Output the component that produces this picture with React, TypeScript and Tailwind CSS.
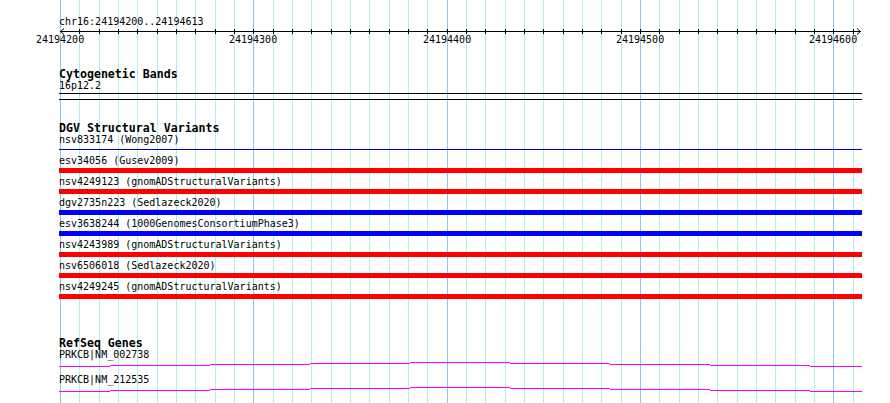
import React from 'react';

const mono = "font-['DejaVu_Sans_Mono','Liberation_Mono',monospace]";

// grid/tick x positions (absolute page px), every 10bp
const ticks = Array.from({ length: 42 }, (_, k) => Math.round(60 + (k * 193.33) / 10));
const ORIGIN = 59;

const majorLabels = [
  { k: 0, text: '24194200' },
  { k: 10, text: '24194300' },
  { k: 20, text: '24194400' },
  { k: 30, text: '24194500' },
  { k: 40, text: '24194600' },
];

type Variant = { label: string; kind: 'red' | 'blue' | 'thin' };

const variants: Variant[] = [
  { label: 'nsv833174 (Wong2007)', kind: 'thin' },
  { label: 'esv34056 (Gusev2009)', kind: 'red' },
  { label: 'nsv4249123 (gnomADStructuralVariants)', kind: 'red' },
  { label: 'dgv2735n223 (Sedlazeck2020)', kind: 'blue' },
  { label: 'esv3638244 (1000GenomesConsortiumPhase3)', kind: 'blue' },
  { label: 'nsv4243989 (gnomADStructuralVariants)', kind: 'red' },
  { label: 'nsv6506018 (Sedlazeck2020)', kind: 'red' },
  { label: 'nsv4249245 (gnomADStructuralVariants)', kind: 'red' },
];

const genes = ['PRKCB|NM_002738', 'PRKCB|NM_212535'];

// intron hat line: 1px steps every 100px, peak in the middle
const steps = [
  [0, 51, 4],
  [51, 151, 3],
  [151, 251, 2],
  [251, 351, 1],
  [351, 451, 0],
  [451, 551, 1],
  [551, 651, 2],
  [651, 751, 3],
  [751, 803, 4],
];

const GridLines = () => (
  <svg className="absolute inset-0" width={890} height={403} shapeRendering="crispEdges">
    {ticks.map((x, k) => (
      <line
        key={k}
        x1={x + 0.5}
        x2={x + 0.5}
        y1={0}
        y2={403}
        stroke={k % 10 === 0 ? '#88c8ee' : '#aeeef0'}
        strokeWidth={1}
      />
    ))}
  </svg>
);

const Ruler = () => (
  <div className="pt-[16px]">
    <div className="h-[12px] leading-[12px] text-[10px]">chr16:24194200..24194613</div>
    <svg width={803} height={6} className="block overflow-visible" shapeRendering="crispEdges">
      <line x1={1} x2={802} y1={3.5} y2={3.5} stroke="#000" />
      {ticks.slice(1).map((x, k) => (
        <line key={k} x1={x - ORIGIN + 0.5} x2={x - ORIGIN + 0.5} y1={1} y2={6} stroke="#000" />
      ))}
      <path d="M5 0.5 L1.5 3.5 L5 6.5" fill="none" stroke="#000" shapeRendering="auto" />
      <path d="M798 0.5 L801.5 3.5 L798 6.5" fill="none" stroke="#000" shapeRendering="auto" />
    </svg>
    <div className="relative h-[12px] leading-[12px] text-[10px]">
      {majorLabels.map((m) => (
        <span
          key={m.k}
          className="absolute top-0 w-[48px] text-center"
          style={{ left: ticks[m.k] - ORIGIN - 24 }}
        >
          {m.text}
        </span>
      ))}
    </div>
  </div>
);

const TrackTitle = ({ children }: { children: React.ReactNode }) => (
  <div className="h-[12px] leading-[12px] text-[11.6px] font-bold">{children}</div>
);

const VariantRow = ({ v }: { v: Variant }) => (
  <div className="h-[21px]">
    <div className="h-[12px] leading-[12px] text-[10px] whitespace-nowrap">{v.label}</div>
    <div className="mt-[1px] h-[5px] flex flex-col justify-center">
      {v.kind === 'thin' && <div className="h-[1px] bg-[#0000cc]" />}
      {v.kind === 'red' && <div className="h-[5px] bg-[#ff0000]" />}
      {v.kind === 'blue' && <div className="h-[5px] bg-[#0000ff]" />}
    </div>
  </div>
);

const GeneRow = ({ name }: { name: string }) => (
  <div className="h-[25px]">
    <div className="h-[12px] leading-[12px] text-[10px]">{name}</div>
    <svg width={803} height={13} className="block" shapeRendering="crispEdges">
      {steps.map(([a, b, dy], i) => (
        <line key={i} x1={a} x2={b} y1={1.5 + dy} y2={1.5 + dy} stroke="#ff00ff" strokeWidth={1} />
      ))}
    </svg>
  </div>
);

export default function App() {
  return (
    <div className={`relative w-[890px] h-[403px] overflow-hidden bg-white text-black ${mono}`}>
      <GridLines />
      <div className="relative ml-[59px] w-[803px] flex flex-col">
        <Ruler />

        <div className="mt-[22px]">
          <TrackTitle>Cytogenetic Bands</TrackTitle>
          <div className="h-[12px] leading-[12px] text-[10px]">16p12.2</div>
          <div className="mt-[1px] h-[7px] border-y border-black" />
        </div>

        <div className="mt-[22px]">
          <TrackTitle>DGV Structural Variants</TrackTitle>
          {variants.map((v) => (
            <VariantRow key={v.label} v={v} />
          ))}
        </div>

        <div className="mt-[35px]">
          <TrackTitle>RefSeq Genes</TrackTitle>
          {genes.map((g) => (
            <GeneRow key={g} name={g} />
          ))}
        </div>
      </div>
    </div>
  );
}
